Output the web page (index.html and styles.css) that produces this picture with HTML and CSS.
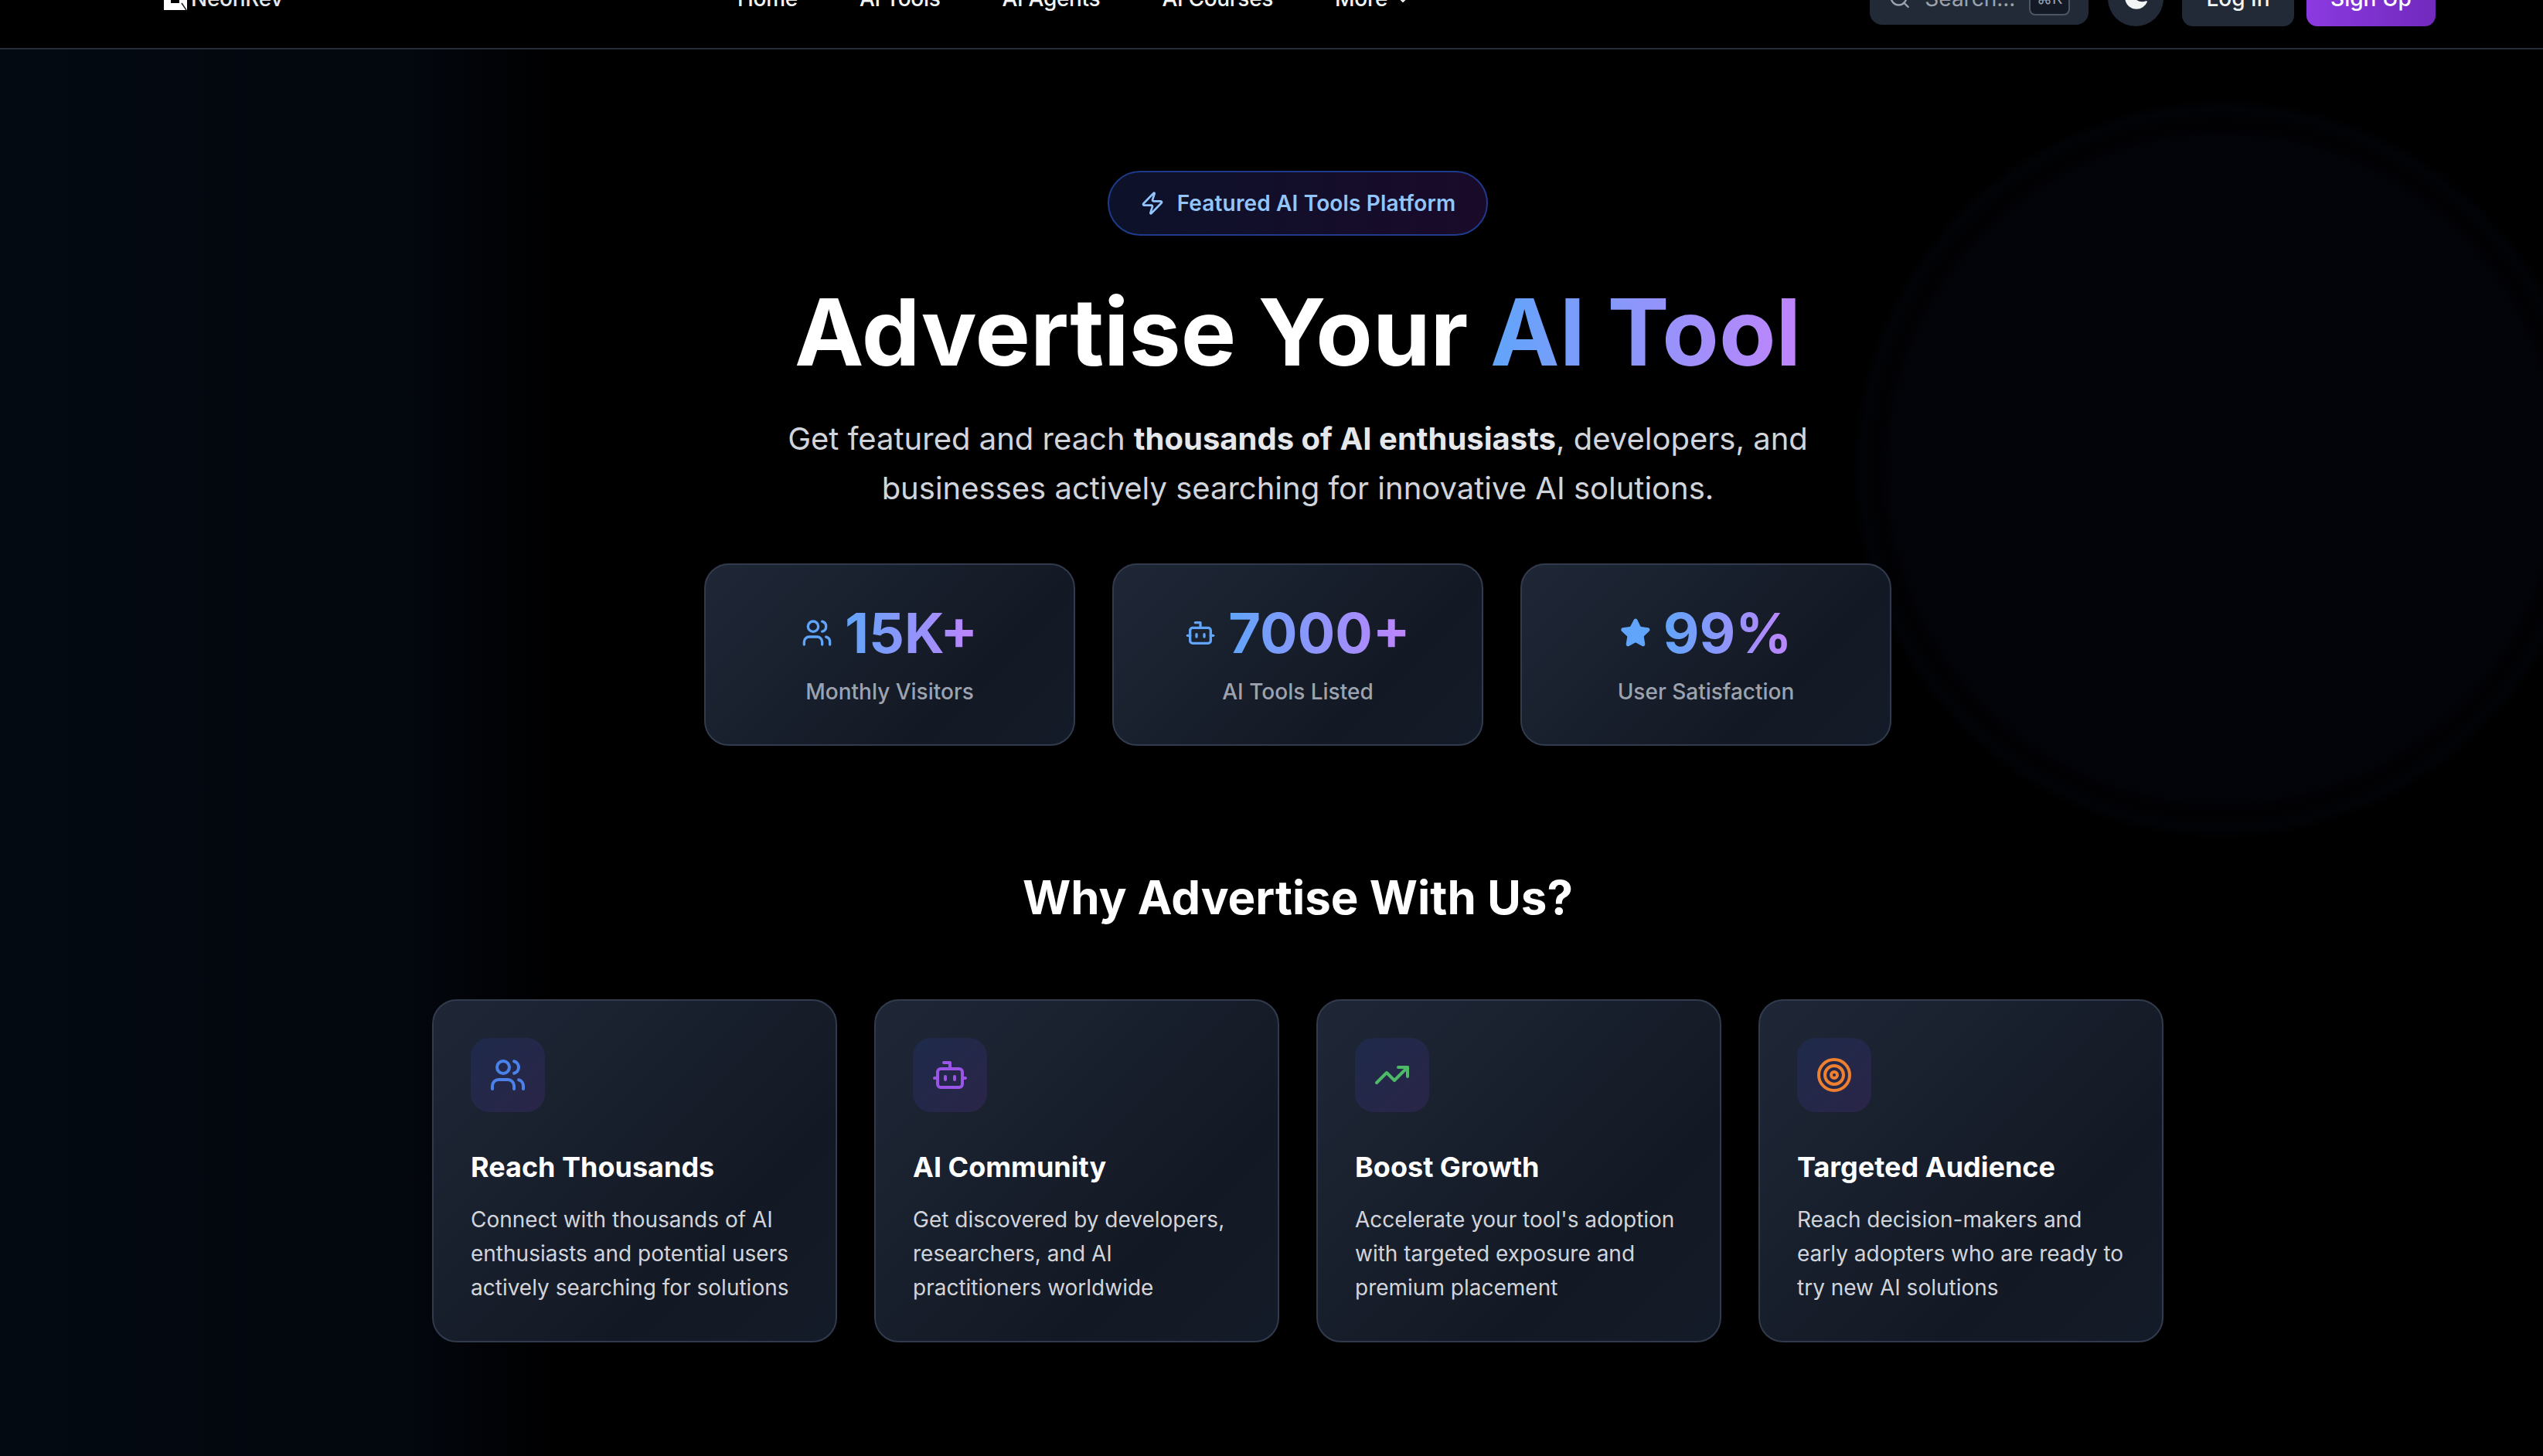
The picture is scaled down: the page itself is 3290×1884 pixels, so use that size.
FILE: index.html
```html
<!DOCTYPE html>
<html>
  <head>
    <title>Advertise Your AI Tool</title>
    <meta charset="UTF-8" />
    <link rel="stylesheet" href="styles.css">
  </head>
  <body>
    <header class="topbar">
      <div class="brand">
        <svg class="brand-mark" viewBox="0 0 30 30"><path d="M0 0h30v30H0z" fill="#fff"/><path d="M9 0h11v21H9z" fill="#000"/><path d="M23 21l6 9" stroke="#222" stroke-width="1.5"/></svg>
        <span>NeonRev</span>
      </div>
      <nav class="nav">
        <a>Home</a>
        <a>AI Tools</a>
        <a>AI Agents</a>
        <a>AI Courses</a>
        <a class="nav-more">More
          <svg class="chev" viewBox="0 0 24 24"><path d="M6 9l6 6 6-6"/></svg>
        </a>
      </nav>
      <div class="actions">
        <div class="search">
          <svg class="search-icon" viewBox="0 0 24 24"><circle cx="11" cy="11" r="8"/><path d="M21 21l-4.3-4.3"/></svg>
          <span>Search...</span>
          <kbd class="kbd">⌘K</kbd>
        </div>
        <div class="theme">
          <svg viewBox="0 0 24 24"><path d="M9.528 1.718a.75.75 0 0 1 .162.819A8.97 8.97 0 0 0 9 6a9 9 0 0 0 9 9 8.97 8.97 0 0 0 3.463-.69.75.75 0 0 1 .981.98 10.503 10.503 0 0 1-9.694 6.46c-5.799 0-10.5-4.701-10.5-10.5 0-4.368 2.667-8.112 6.46-9.694a.75.75 0 0 1 .818.162z"/></svg>
        </div>
        <a class="btn btn-login">Log In</a>
        <a class="btn btn-signup">Sign Up</a>
      </div>
    </header>

    <main class="page">
      <div class="blob"></div>

      <section class="hero">
        <div class="badge">
          <svg class="icon-line" viewBox="0 0 24 24"><path d="M4 14a1 1 0 0 1-.78-1.63l9.9-10.2a.5.5 0 0 1 .86.46l-1.92 6.02A1 1 0 0 0 13 10h7a1 1 0 0 1 .78 1.63l-9.9 10.2a.5.5 0 0 1-.86-.46l1.92-6.02A1 1 0 0 0 11 14z"/></svg>
          <span>Featured AI Tools Platform</span>
        </div>
        <h1>Advertise Your <span class="grad">AI Tool</span></h1>
        <p class="lead">Get featured and reach <strong>thousands of AI enthusiasts</strong>, developers, and businesses actively searching for innovative AI solutions.</p>

        <div class="stats">
          <div class="stat">
            <div class="stat-value">
              <svg class="icon-line" viewBox="0 0 24 24"><path d="M16 21v-2a4 4 0 0 0-4-4H6a4 4 0 0 0-4 4v2"/><path d="M16 3.13a4 4 0 0 1 0 7.75"/><path d="M22 21v-2a4 4 0 0 0-3-3.87"/><circle cx="9" cy="7" r="4"/></svg>
              <span class="grad">15K+</span>
            </div>
            <div class="stat-label">Monthly Visitors</div>
          </div>
          <div class="stat">
            <div class="stat-value">
              <svg class="icon-line" viewBox="0 0 24 24"><path d="M12 8V4H8"/><rect x="4" y="8" width="16" height="12" rx="2"/><path d="M2 14h2"/><path d="M20 14h2"/><path d="M15 13v2"/><path d="M9 13v2"/></svg>
              <span class="grad">7000+</span>
            </div>
            <div class="stat-label">AI Tools Listed</div>
          </div>
          <div class="stat">
            <div class="stat-value">
              <svg class="icon-line icon-fill" viewBox="0 0 24 24"><path d="M11.5 2.3a.53.53 0 0 1 1 0l2.3 4.7a2.1 2.1 0 0 0 1.6 1.2l5.2.8a.53.53 0 0 1 .3.9l-3.8 3.7a2.1 2.1 0 0 0-.6 1.9l.9 5.2a.53.53 0 0 1-.8.6l-4.6-2.5a2.1 2.1 0 0 0-2 0l-4.6 2.5a.53.53 0 0 1-.8-.6l.9-5.2a2.1 2.1 0 0 0-.6-1.9L1.9 9.9a.53.53 0 0 1 .3-.9l5.2-.8A2.1 2.1 0 0 0 9 7z"/></svg>
              <span class="grad">99%</span>
            </div>
            <div class="stat-label">User Satisfaction</div>
          </div>
        </div>
      </section>

      <section class="why">
        <h2>Why Advertise With Us?</h2>
        <div class="features">
          <article class="feature">
            <div class="feature-icon tone-blue">
              <svg viewBox="0 0 24 24"><path d="M16 21v-2a4 4 0 0 0-4-4H6a4 4 0 0 0-4 4v2"/><path d="M16 3.13a4 4 0 0 1 0 7.75"/><path d="M22 21v-2a4 4 0 0 0-3-3.87"/><circle cx="9" cy="7" r="4"/></svg>
            </div>
            <h3>Reach Thousands</h3>
            <p>Connect with thousands of AI enthusiasts and potential users actively searching for solutions</p>
          </article>
          <article class="feature">
            <div class="feature-icon tone-purple">
              <svg viewBox="0 0 24 24"><path d="M12 8V4H8"/><rect x="4" y="8" width="16" height="12" rx="2"/><path d="M2 14h2"/><path d="M20 14h2"/><path d="M15 13v2"/><path d="M9 13v2"/></svg>
            </div>
            <h3>AI Community</h3>
            <p>Get discovered by developers, researchers, and AI practitioners worldwide</p>
          </article>
          <article class="feature">
            <div class="feature-icon tone-green">
              <svg viewBox="0 0 24 24"><path d="M16 7h6v6"/><path d="M22 7l-8.5 8.5-5-5L2 17"/></svg>
            </div>
            <h3>Boost Growth</h3>
            <p>Accelerate your tool's adoption with targeted exposure and premium placement</p>
          </article>
          <article class="feature">
            <div class="feature-icon tone-orange">
              <svg viewBox="0 0 24 24"><circle cx="12" cy="12" r="10"/><circle cx="12" cy="12" r="6"/><circle cx="12" cy="12" r="2"/></svg>
            </div>
            <h3>Targeted Audience</h3>
            <p>Reach decision-makers and early adopters who are ready to try new AI solutions</p>
          </article>
        </div>
      </section>
    </main>
  </body>
</html>
```

FILE: styles.css
```css
html {
  height: 100%;
  overflow: hidden;
}
body {
  margin: 0;
  height: 100%;
  overflow: hidden;
  background: #000;
  color: #fff;
  font-family: Inter, "Liberation Sans", sans-serif;
}

/* page is photographed scrolled down a little, so the bar starts above the top */
.topbar {
  display: flex;
  align-items: flex-end;
  height: 74px;
  margin-top: -40px;
  padding: 0 139px 28px 212px;
  border-bottom: 2px solid #252c3a;
  background: #000;
  position: relative;
  z-index: 2;
}
.brand {
  display: flex;
  align-items: center;
  gap: 5px;
  width: 742px;
  margin-bottom: 16px;
  font-size: 28px;
  line-height: 40px;
  font-weight: 500;
  letter-spacing: -0.3px;
  color: #e5e7eb;
}
.brand-mark {
  width: 30px;
  height: 30px;
}
.nav {
  display: flex;
  align-items: center;
  gap: 80px;
  margin-bottom: 16px;
  font-size: 28px;
  line-height: 40px;
  font-weight: 500;
  letter-spacing: -0.3px;
  color: #f3f4f6;
}
.nav-more {
  display: flex;
  align-items: center;
  gap: 8px;
}
.chev {
  width: 24px;
  height: 24px;
  margin-top: 2px;
  fill: none;
  stroke: #f3f4f6;
  stroke-width: 2;
  stroke-linecap: round;
  stroke-linejoin: round;
}
.actions {
  display: flex;
  align-items: flex-end;
  margin-left: auto;
  gap: 16px;
}
.search {
  display: flex;
  align-items: center;
  box-sizing: border-box;
  width: 283px;
  height: 68px;
  margin: 0 9px 2px 0;
  padding: 0 24px;
  gap: 18px;
  background: #232a37;
  border-radius: 16px;
  color: #9ca3af;
  font-size: 28px;
}
.search-icon {
  width: 32px;
  height: 32px;
  fill: none;
  stroke: #9ca3af;
  stroke-width: 2;
  stroke-linecap: round;
}
.kbd {
  box-sizing: border-box;
  margin-left: auto;
  width: 57px;
  height: 44px;
  border: 2px solid #4b5563;
  border-radius: 8px;
  background: #141a25;
  color: #9ca3af;
  font-family: inherit;
  font-size: 20px;
  line-height: 40px;
  text-align: center;
}
.theme {
  display: flex;
  align-items: center;
  justify-content: center;
  width: 72px;
  height: 72px;
  margin-right: 8px;
  border-radius: 50%;
  background: #232a37;
}
.theme svg {
  width: 34px;
  height: 34px;
  fill: #f3f4f6;
}
.btn {
  display: flex;
  align-items: center;
  justify-content: center;
  height: 72px;
  border-radius: 14px;
  font-size: 28px;
  font-weight: 500;
}
.btn-login {
  width: 145px;
  background: #232a37;
  color: #f3f4f6;
}
.btn-signup {
  width: 167px;
  background: linear-gradient(90deg, #8b3ae0, #7129bd);
}

.page {
  position: relative;
  height: 1820px;
  box-sizing: border-box;
  padding: 157px 0 0 68px;
  background: linear-gradient(90deg, #040a12 0, #03070e 16%, #000 22%);
  overflow: hidden;
}
.blob {
  position: absolute;
  left: 2395px;
  top: 63px;
  width: 960px;
  height: 960px;
  border-radius: 50%;
  background: radial-gradient(circle closest-side, #03040a 0, #03040a 88%, #010103 93%, #020307 97%, #000 100%);
}

.hero {
  position: relative;
  display: flex;
  flex-direction: column;
  align-items: center;
}
.badge {
  display: flex;
  align-items: center;
  gap: 16px;
  box-sizing: border-box;
  height: 84px;
  padding: 0 40px;
  border: 2px solid #1e3a8a;
  border-radius: 42px;
  background: linear-gradient(90deg, #0c1229, #1a0a2a);
  color: #93c5fd;
  font-size: 28px;
  font-weight: 600;
  letter-spacing: 0.15px;
}
.icon-line {
  width: 32px;
  height: 32px;
  fill: none;
  stroke: #60a5fa;
  stroke-width: 2;
  stroke-linecap: round;
  stroke-linejoin: round;
}
.badge .icon-line {
  stroke: #93c5fd;
}
h1 {
  margin: 50px 0 0;
  font-size: 120px;
  line-height: 150px;
  font-weight: 700;
}
.grad {
  background: linear-gradient(90deg, #60a5fa, #c084fc);
  -webkit-background-clip: text;
  background-clip: text;
  color: transparent;
}
.lead {
  width: 1400px;
  margin: 31px 0 0;
  font-size: 40px;
  line-height: 64px;
  text-align: center;
  color: #d1d5db;
}
.lead strong {
  font-weight: 700;
  color: #e5e7eb;
}

.stats {
  display: grid;
  grid-template-columns: repeat(3, 1fr);
  gap: 48px;
  width: 1536px;
  margin-top: 65px;
}
.stat,
.feature {
  box-sizing: border-box;
  border: 2px solid #323b4d;
  background: linear-gradient(135deg, #1f2737, #131924 70%, #141b28);
}
.stat {
  display: flex;
  flex-direction: column;
  align-items: center;
  height: 236px;
  padding-top: 48px;
  border-radius: 32px;
}
.stat-value {
  display: flex;
  align-items: center;
  gap: 16px;
  font-size: 72px;
  line-height: 80px;
  font-weight: 700;
}
.stat-value .icon-line {
  width: 40px;
  height: 40px;
}
.icon-fill {
  fill: #60a5fa;
}
.stat-label {
  margin-top: 16px;
  font-size: 28px;
  line-height: 40px;
  font-weight: 500;
  color: #9ca3af;
}

.why {
  position: relative;
  display: flex;
  flex-direction: column;
  align-items: center;
  margin-top: 160px;
}
h2 {
  margin: 0;
  font-size: 60px;
  line-height: 72px;
  font-weight: 700;
}
.features {
  display: grid;
  grid-template-columns: repeat(4, 1fr);
  gap: 48px;
  width: 2240px;
  margin-top: 96px;
}
.feature {
  height: 444px;
  padding: 48px;
  border-radius: 32px;
}
.feature-icon {
  display: flex;
  align-items: center;
  justify-content: center;
  width: 96px;
  height: 96px;
  border-radius: 24px;
  background: linear-gradient(135deg, #1e2a4a, #2a2548);
}
.feature-icon svg {
  width: 48px;
  height: 48px;
  fill: none;
  stroke-width: 2;
  stroke-linecap: round;
  stroke-linejoin: round;
}
.tone-blue svg { stroke: #4b82ea; }
.tone-purple svg { stroke: #9b55e6; }
.tone-green svg { stroke: #4cba66; }
.tone-orange svg { stroke: #ef8030; }
.feature h3 {
  margin: 43px 0 0;
  font-size: 36px;
  line-height: 56px;
  font-weight: 700;
}
.feature p {
  margin: 18px 0 0;
  font-size: 28px;
  line-height: 44px;
  color: #d1d5db;
}
```
